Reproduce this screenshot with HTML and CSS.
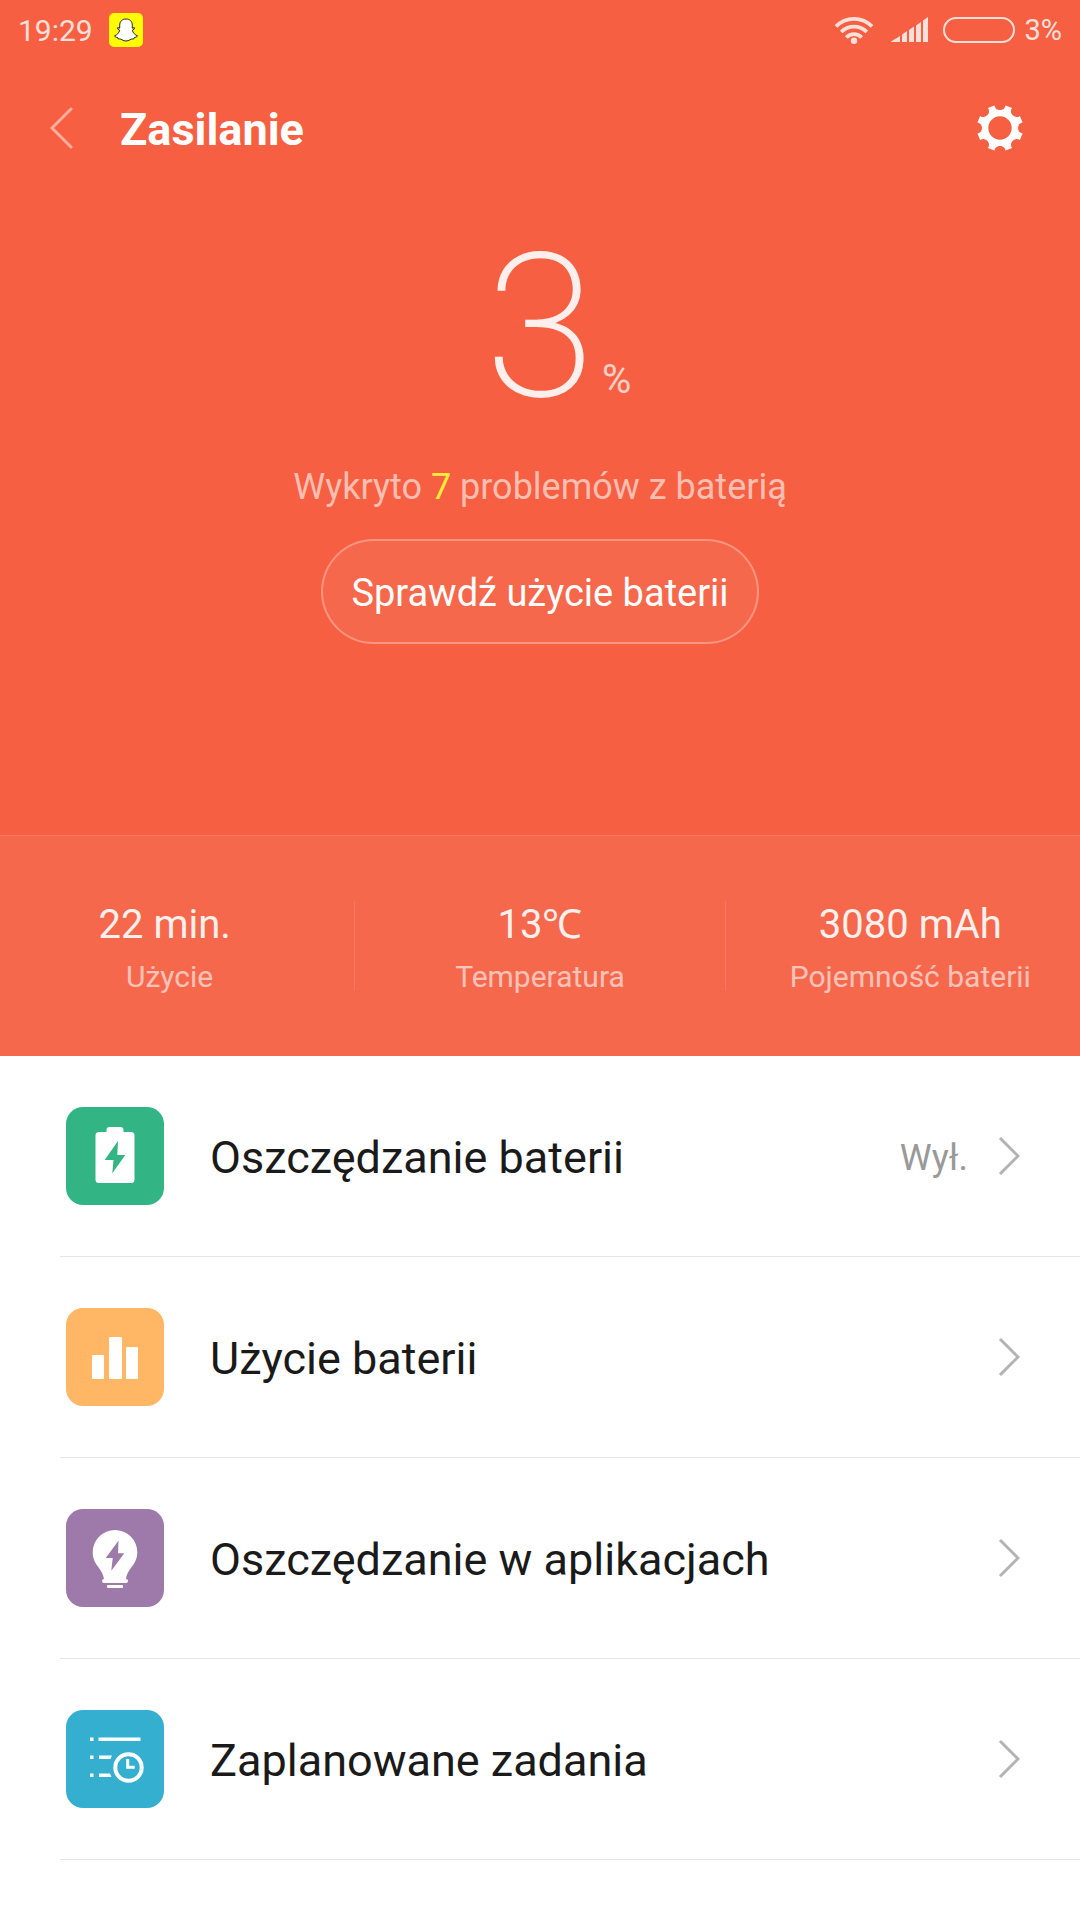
FILE: index.html
```html
<!DOCTYPE html>
<html lang="pl">
<head>
    <meta charset="UTF-8">
    <meta name="viewport" content="width=device-width, initial-scale=1.0">
    <title>Zasilanie</title>
    <link rel="stylesheet" href="styles.css">
</head>
<body>
    <div class="hero">
        <div class="status-bar">
            <span class="time">19:29</span>
            <svg class="snap" viewBox="0 0 34 34">
                <rect width="34" height="34" rx="5" fill="#fffc00"/>
                <path d="M17 6c-4 0-6.300 2.600-6.300 6.200v3l-2-.6v1.400l2 1.300c-.8 2.600-2.600 4.700-5.200 5.500.4 1.200 1.800 1.500 3.200 1.800l.6 1.400c1.200-.2 2.500-.1 3.700.8 1.200.8 2.400 1.200 4 1.200s2.800-.4 4-1.200c1.200-.9 2.500-1 3.700-.8l.6-1.400c1.400-.3 2.800-.6 3.200-1.800-2.600-.8-4.400-2.900-5.200-5.500l2-1.300v-1.400l-2 .6v-3C23.300 8.600 21 6 17 6z" fill="#fff" stroke="#222" stroke-width="1"/>
            </svg>
            <div class="indicators">
                <svg class="wifi" viewBox="0 0 40 28">
                    <g fill="none" stroke="#fff" stroke-width="3.800">
                        <path d="M2 10.500a25 25 0 0 1 36 0"/>
                        <path d="M7.200 16a18 18 0 0 1 25.600 0"/>
                        <path d="M12.300 21.500a10.500 10.500 0 0 1 15.400 0"/>
                    </g>
                    <circle cx="20" cy="24.800" r="3.200" fill="#fff"/>
                </svg>
                <svg class="signal" viewBox="0 0 38 26">
                    <path d="M0 24.500L9 19v6H0zM11 17.500l5-3.500v11h-5zM18 13l5-3.500V25h-5zM25 8.500L30 5v20h-5zM32 3.500l5-3.500v25h-5z" fill="#fff"/>
                </svg>
                <span class="battery"></span>
                <span class="charge">3%</span>
            </div>
        </div>

        <div class="title-bar">
            <button class="back" aria-label="Wstecz">
                <svg viewBox="0 0 24 42">
                    <path d="M21 2L2 21l19 19" fill="none" stroke="#fff" stroke-width="3" stroke-linecap="round"/>
                </svg>
            </button>
            <h1>Zasilanie</h1>
            <button class="settings" aria-label="Ustawienia">
                <svg viewBox="-24 -24 48 48">
                    <path fill="#fff" fill-rule="evenodd" d="M-5.500-22.600A5.600 5.600 0 0 0 5.500-22.600L12.100-19.900A5.600 5.600 0 0 0 19.900-12.100L22.600-5.500A5.600 5.600 0 0 0 22.600 5.500L19.900 12.100A5.600 5.600 0 0 0 12.100 19.900L5.500 22.600A5.600 5.600 0 0 0-5.500 22.600L-12.100 19.900A5.600 5.600 0 0 0-19.900 12.100L-22.600 5.500A5.600 5.600 0 0 0-22.600-5.500L-19.900-12.100A5.600 5.600 0 0 0-12.100-19.900zM0-11.700a11.700 11.700 0 1 0 0 23.400a11.700 11.700 0 1 0 0-23.400z"/>
                </svg>
            </button>
        </div>

        <div class="level">
            <span class="number">3</span>
            <span class="percent">%</span>
        </div>
        <p class="problems">Wykryto <span class="count">7</span> problemów z baterią</p>
        <button class="check">Sprawdź użycie baterii</button>

        <div class="stats">
            <div class="stat">
                <span class="value">22 min.&nbsp;</span>
                <span class="label">Użycie</span>
            </div>
            <div class="stat">
                <span class="value">13℃</span>
                <span class="label">Temperatura</span>
            </div>
            <div class="stat">
                <span class="value">3080 mAh</span>
                <span class="label">Pojemność baterii</span>
            </div>
        </div>
    </div>

    <div class="menu">
        <a class="item" href="#saver">
            <svg class="icon" viewBox="0 0 98 98">
                <rect width="98" height="98" rx="17" fill="#32b484"/>
                <path d="M33 25h7.500v-2a3 3 0 0 1 3-3h11a3 3 0 0 1 3 3v2H65a3.500 3.500 0 0 1 3.500 3.500v44A3.500 3.500 0 0 1 65 76H33a3.500 3.500 0 0 1-3.500-3.500v-44A3.500 3.500 0 0 1 33 25z" fill="#fff"/>
                <path d="M52 34L38.700 53h8.800l-1.200 13.300L59.300 48h-8z" fill="#32b484"/>
            </svg>
            <span class="name">Oszczędzanie baterii</span>
            <span class="state">Wył.</span>
            <svg class="arrow" viewBox="0 0 22 40"><path d="M2 2l18 18L2 38" fill="none" stroke="#b3b3b3" stroke-width="3"/></svg>
        </a>
        <a class="item" href="#usage">
            <svg class="icon" viewBox="0 0 98 98">
                <rect width="98" height="98" rx="17" fill="#ffb766"/>
                <g fill="#fff">
                    <rect x="26" y="47" width="12" height="24" rx="1"/>
                    <rect x="43" y="29" width="13" height="42" rx="1"/>
                    <rect x="60" y="39" width="12" height="32" rx="1"/>
                </g>
            </svg>
            <span class="name">Użycie baterii</span>
            <svg class="arrow" viewBox="0 0 22 40"><path d="M2 2l18 18L2 38" fill="none" stroke="#b3b3b3" stroke-width="3"/></svg>
        </a>
        <a class="item" href="#apps">
            <svg class="icon" viewBox="0 0 98 98">
                <rect width="98" height="98" rx="17" fill="#9d7aa9"/>
                <g fill="#fff">
                    <path d="M49 21a22.300 22.300 0 0 0-22.300 22.300c0 13 9.800 15.700 11.300 26.700h22c1.500-11 11.300-13.700 11.300-26.700A22.300 22.300 0 0 0 49 21z"/>
                    <rect x="36" y="70" width="26" height="4" rx="2"/>
                    <rect x="41" y="76" width="16" height="3" rx="1"/>
                </g>
                <path d="M52.500 31.700L39.700 49h7l-1.400 12.700 13-17.400H52z" fill="#9d7aa9"/>
            </svg>
            <span class="name">Oszczędzanie w aplikacjach</span>
            <svg class="arrow" viewBox="0 0 22 40"><path d="M2 2l18 18L2 38" fill="none" stroke="#b3b3b3" stroke-width="3"/></svg>
        </a>
        <a class="item" href="#tasks">
            <svg class="icon" viewBox="0 0 98 98">
                <rect width="98" height="98" rx="17" fill="#35afd0"/>
                <path d="M24 27.500h3.500V31H24zM32.500 27.500h42V31h-42zM24 45.500h3.500V49H24zM33 45.500h13L44.500 49H33zM24 63.500h3.500V67H24zM33 63.500h11l1.500 3.500H33z" fill="#fff"/>
                <circle cx="62.500" cy="57.500" r="13.200" fill="none" stroke="#fff" stroke-width="4"/>
                <path d="M61.700 49v8.200h7" fill="none" stroke="#fff" stroke-width="3"/>
            </svg>
            <span class="name">Zaplanowane zadania</span>
            <svg class="arrow" viewBox="0 0 22 40"><path d="M2 2l18 18L2 38" fill="none" stroke="#b3b3b3" stroke-width="3"/></svg>
        </a>
    </div>
</body>
</html>
```

FILE: styles.css
```css
* {
    box-sizing: border-box;
}
body {
    font-family: Roboto, sans-serif;
    margin: 0;
    background: #fff;
    color: #1a1a1a;
}
button {
    font-family: inherit;
    background: none;
    border: none;
    padding: 0;
    cursor: pointer;
}
svg {
    display: block;
}
.hero {
    background: #f65f41;
    color: white;
    display: flex;
    flex-direction: column;
    align-items: center;
}

/* Status bar */
.status-bar {
    align-self: stretch;
    display: flex;
    align-items: center;
    height: 60px;
    padding: 0 18px;
    font-size: 30px;
}
.time {
    opacity: 0.8;
    margin-right: 16px;
}
.snap {
    width: 34px;
    height: 34px;
}
.indicators {
    display: flex;
    align-items: center;
    gap: 9px;
    margin-left: auto;
    opacity: 0.8;
}
.wifi {
    width: 40px;
    height: 28px;
    margin-right: 8px;
}
.signal {
    width: 38px;
    height: 26px;
    margin-right: 5px;
}
.battery {
    width: 72px;
    height: 26px;
    border: 2px solid white;
    border-radius: 13px;
}
.charge {
    font-size: 29px;
}

/* Title bar */
.title-bar {
    align-self: stretch;
    display: flex;
    align-items: center;
    height: 136px;
    padding: 0 56px 0 50px;
}
.back svg {
    width: 24px;
    height: 42px;
    opacity: 0.5;
}
.title-bar h1 {
    flex: 1;
    margin: 2px 0 0 46px;
    font-size: 45px;
    font-weight: bold;
}
.settings svg {
    width: 48px;
    height: 48px;
}

/* Battery level */
.level {
    align-self: stretch;
    display: grid;
    grid-template-columns: 1fr auto 1fr;
    align-items: end;
    margin-top: 17px;
}
.number {
    grid-column: 2;
    font-size: 200px;
    font-weight: 200;
    line-height: 230px;
    opacity: 0.9;
}
.percent {
    margin: 0 0 40px 7px;
    font-size: 40px;
    opacity: 0.7;
}
.problems {
    margin: 22px 0 0;
    font-size: 36px;
    line-height: 44px;
    color: rgba(255, 255, 255, 0.6);
}
.count {
    color: #ffeb3b;
}
.check {
    margin-top: 30px;
    height: 105px;
    padding: 2px 28px 0;
    border: 2px solid rgba(255, 255, 255, 0.3);
    border-radius: 53px;
    background: rgba(255, 255, 255, 0.06);
    color: white;
    font-size: 38px;
}

/* Stats */
.stats {
    align-self: stretch;
    display: flex;
    margin-top: 191px;
    padding: 65px 0;
    border-top: 1px solid rgba(255, 255, 255, 0.12);
    background: rgba(255, 255, 255, 0.06);
    overflow: hidden;
}
.stat {
    flex: 1;
    display: flex;
    flex-direction: column;
    align-items: center;
    height: 90px;
    white-space: nowrap;
}
.stat:first-child {
    margin-left: -15px;
}
.stat:last-child {
    margin-right: -15px;
}
.stat + .stat {
    border-left: 1px solid rgba(255, 255, 255, 0.12);
}
.value {
    font-size: 40px;
    line-height: 48px;
    opacity: 0.9;
}
.label {
    margin-top: 6px;
    font-size: 30px;
    line-height: 44px;
    opacity: 0.6;
}

/* Menu */
.item {
    display: flex;
    align-items: center;
    height: 201px;
    margin-left: 60px;
    padding: 0 60px 0 6px;
    border-bottom: 1px solid #e5e5e5;
    color: inherit;
    text-decoration: none;
}
.icon {
    width: 98px;
    height: 98px;
}
.name {
    flex: 1;
    margin-left: 46px;
    padding-top: 2px;
    font-size: 45px;
}
.state {
    margin-right: 30px;
    padding-top: 4px;
    font-size: 36px;
    color: #999;
}
.arrow {
    width: 22px;
    height: 40px;
}
```
